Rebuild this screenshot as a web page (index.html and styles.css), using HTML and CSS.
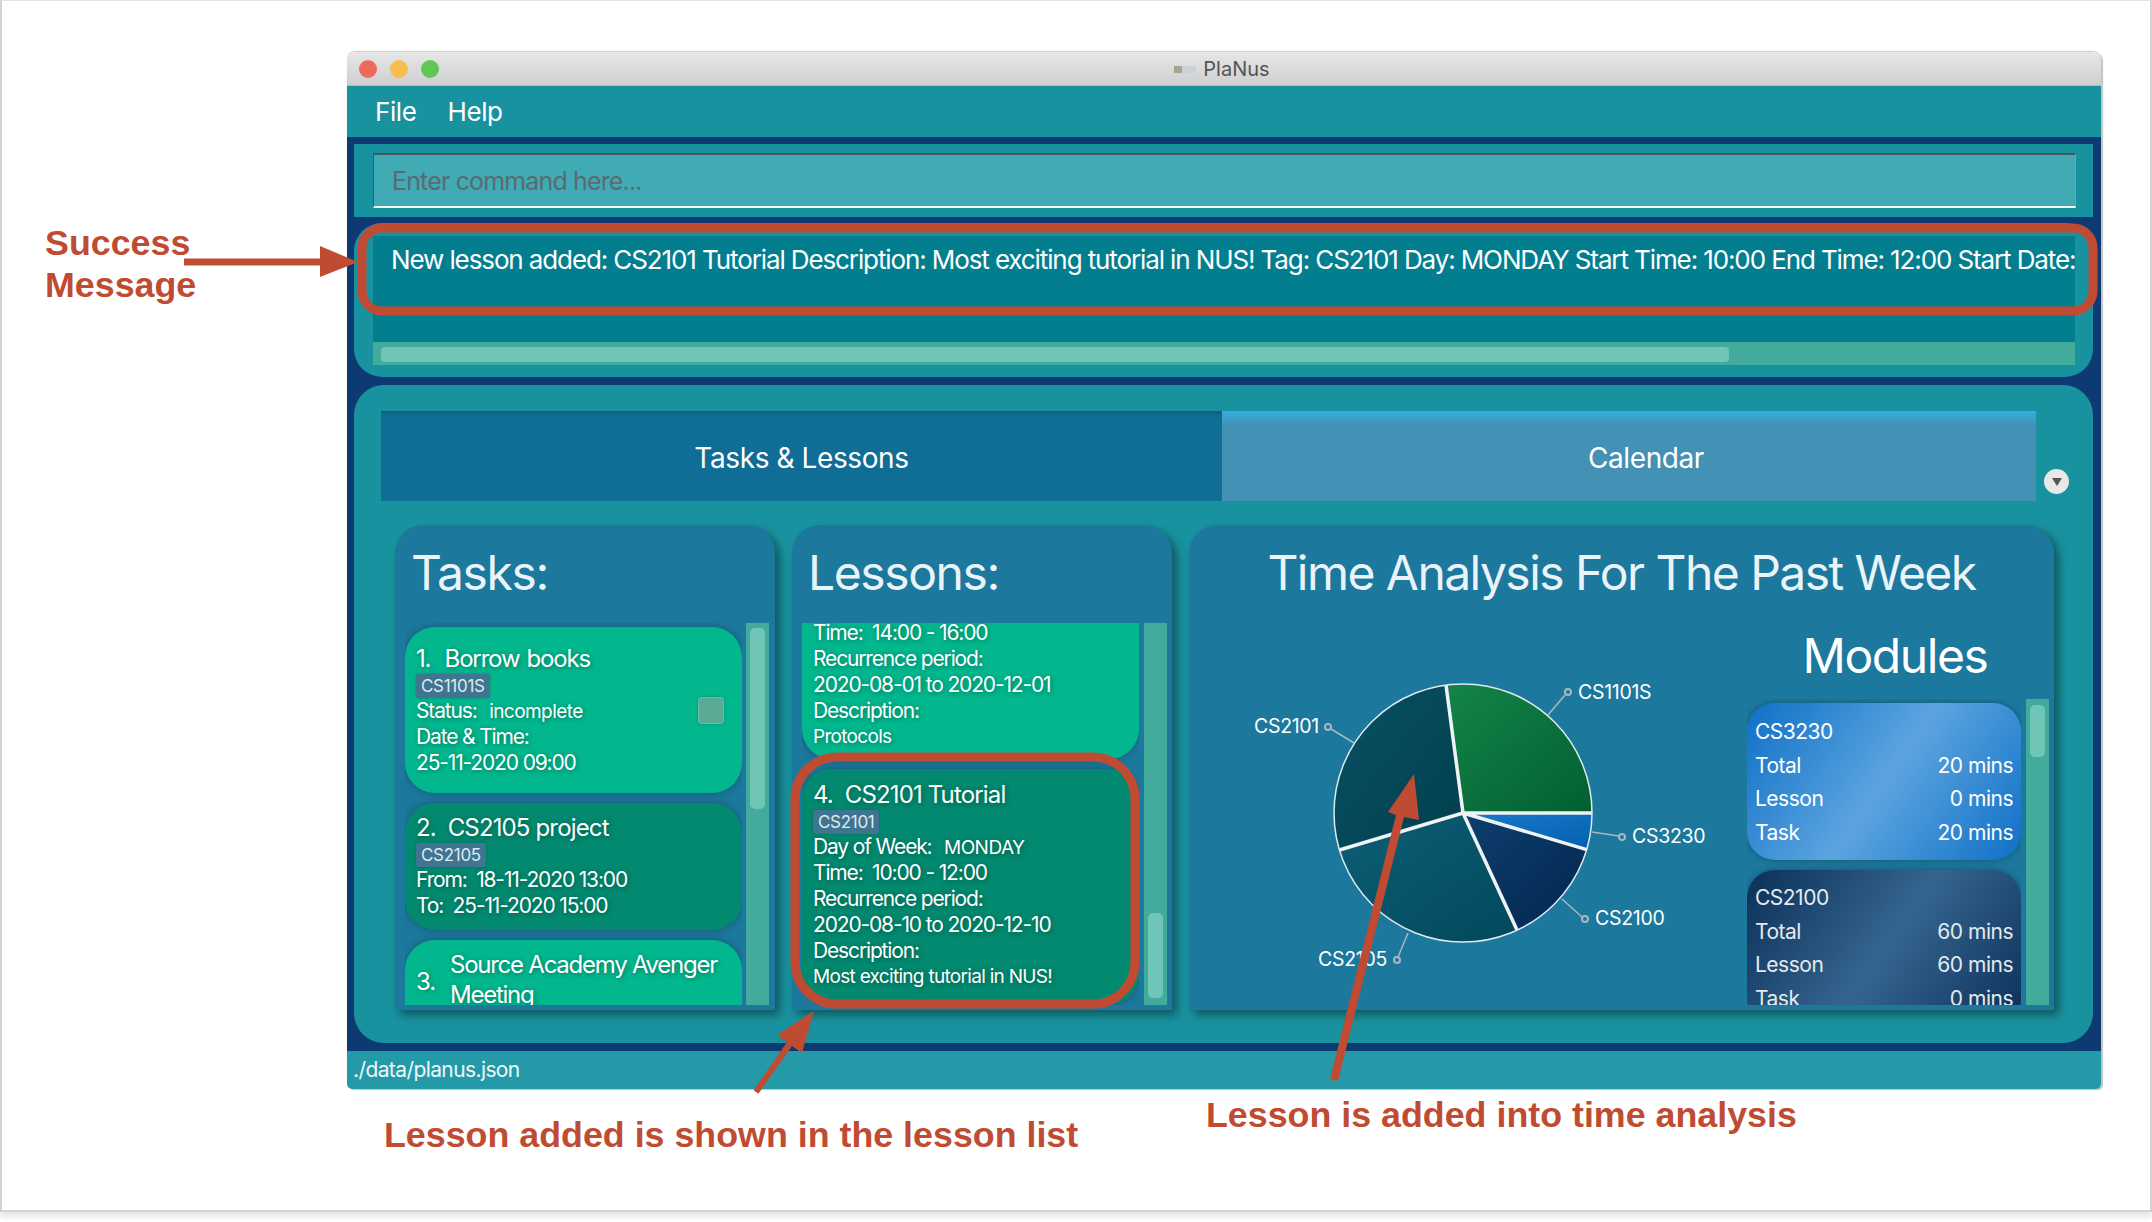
FILE: index.html
```html
<!DOCTYPE html>
<html lang="en">
<head>
    <meta charset="UTF-8">
    <title>PlaNus - Add lesson</title>
    <link rel="stylesheet" href="styles.css">
</head>
<body>
    <div class="page">
        <div class="window">
            <!-- Title bar -->
            <div class="titlebar">
                <div class="lights"><span class="light red"></span><span class="light yellow"></span><span class="light green"></span></div>
                <div class="title"><span class="app-icon"></span>PlaNus</div>
            </div>

            <!-- Menu -->
            <div class="menu"><span>File</span><span>Help</span></div>

            <div class="content">
                <!-- Command box -->
                <div class="command-panel">
                    <div class="command-input">Enter command here...</div>
                </div>

                <!-- Result display -->
                <div class="result-panel">
                    <div class="result-text">New lesson added: CS2101 Tutorial Description: Most exciting tutorial in NUS! Tag: CS2101 Day: MONDAY Start Time: 10:00 End Time: 12:00 Start Date:</div>
                    <div class="hbar"><div class="hbar-thumb"></div></div>
                </div>

                <!-- Main panel -->
                <div class="main-panel">
                    <div class="tabs">
                        <div class="tab tab-active">Tasks &amp; Lessons</div>
                        <div class="tab tab-calendar">Calendar</div>
                        <div class="tab-more"><svg width="10" height="8" viewBox="0 0 10 8"><path d="M0 0 H10 L5 8 Z" fill="#555"/></svg></div>
                    </div>

                    <div class="columns">
                        <!-- Tasks -->
                        <div class="column column-list">
                            <h2>Tasks:</h2>
                            <div class="list-wrap">
                                <div class="list">
                                    <div class="card card-light task-first">
                                        <div class="card-body">
                                            <div class="card-title">1.&nbsp; Borrow books</div>
                                            <div><span class="tag">CS1101S</span></div>
                                            <div class="line">Status:&nbsp; <span class="small">incomplete</span></div>
                                            <div class="line">Date &amp; Time:</div>
                                            <div class="line">25-11-2020 09:00</div>
                                        </div>
                                        <span class="check"></span>
                                    </div>
                                    <div class="card card-dark task-second">
                                        <div class="card-body">
                                            <div class="card-title">2.&nbsp; CS2105 project</div>
                                            <div><span class="tag">CS2105</span></div>
                                            <div class="line">From:&nbsp; 18-11-2020 13:00</div>
                                            <div class="line">To:&nbsp; 25-11-2020 15:00</div>
                                        </div>
                                    </div>
                                    <div class="card card-light task-third">
                                        <span class="card-num">3.</span>
                                        <div class="card-wrap-title">Source Academy Avenger Meeting</div>
                                    </div>
                                </div>
                                <div class="track"><div class="thumb thumb-tasks"></div></div>
                            </div>
                        </div>

                        <!-- Lessons -->
                        <div class="column column-list">
                            <h2>Lessons:</h2>
                            <div class="list-wrap">
                                <div class="list">
                                    <div class="card card-light lesson-clipped">
                                        <div class="card-body">
                                            <div class="line">Time:&nbsp; 14:00 - 16:00</div>
                                            <div class="line">Recurrence period:</div>
                                            <div class="line">2020-08-01 to 2020-12-01</div>
                                            <div class="line">Description:</div>
                                            <div class="line small">Protocols</div>
                                        </div>
                                    </div>
                                    <div class="card card-dark lesson-new">
                                        <div class="card-body">
                                            <div class="card-title">4.&nbsp; CS2101 Tutorial</div>
                                            <div><span class="tag">CS2101</span></div>
                                            <div class="line">Day of Week:&nbsp; <span class="small">MONDAY</span></div>
                                            <div class="line">Time:&nbsp; 10:00 - 12:00</div>
                                            <div class="line">Recurrence period:</div>
                                            <div class="line">2020-08-10 to 2020-12-10</div>
                                            <div class="line">Description:</div>
                                            <div class="line small">Most exciting tutorial in NUS!</div>
                                        </div>
                                    </div>
                                </div>
                                <div class="track"><div class="thumb thumb-lessons"></div></div>
                            </div>
                        </div>

                        <!-- Time analysis -->
                        <div class="column column-time">
                            <h2 class="time-title">Time Analysis For The Past Week</h2>
                            <div class="time-body">
                                <svg class="pie" viewBox="1189 623 553 382" width="553" height="382">
                                    <defs>
                                        <linearGradient id="gGreen" x1="0" y1="0" x2="1" y2="1"><stop offset="0" stop-color="#148449"/><stop offset="1" stop-color="#025f30"/></linearGradient>
                                        <linearGradient id="gBlue" x1="0" y1="0" x2="1" y2="1"><stop offset="0" stop-color="#1a7acb"/><stop offset="1" stop-color="#0260b0"/></linearGradient>
                                        <linearGradient id="gNavy" x1="0" y1="0" x2="1" y2="1"><stop offset="0" stop-color="#0f3e70"/><stop offset="1" stop-color="#01264d"/></linearGradient>
                                        <linearGradient id="gTeal" x1="0" y1="0" x2="1" y2="1"><stop offset="0" stop-color="#0c5f76"/><stop offset="1" stop-color="#02485c"/></linearGradient>
                                        <linearGradient id="gDeep" x1="0" y1="0" x2="1" y2="1"><stop offset="0" stop-color="#085264"/><stop offset="1" stop-color="#023e4d"/></linearGradient>
                                    </defs>
                                    <path d="M1463 813 L1446 685 A129 129 0 0 1 1592 813 Z" fill="url(#gGreen)"/>
                                    <path d="M1463 813 L1592 813 A129 129 0 0 1 1586.7 849.6 Z" fill="url(#gBlue)"/>
                                    <path d="M1463 813 L1586.7 849.6 A129 129 0 0 1 1517 930 Z" fill="url(#gNavy)"/>
                                    <path d="M1463 813 L1517 930 A129 129 0 0 1 1339.4 850 Z" fill="url(#gTeal)"/>
                                    <path d="M1463 813 L1339.4 850 A129 129 0 0 1 1446 685 Z" fill="url(#gDeep)"/>
                                    <path d="M1463 813 L1446 685 M1463 813 L1592 813 M1463 813 L1586.7 849.6 M1463 813 L1517 930 M1463 813 L1339.4 850" class="pie-spoke"/>
                                    <circle cx="1463" cy="813" r="129" class="pie-rim"/>
                                    <path d="M1548 715 L1565 695 M1354 743 L1331 729 M1592 832 L1619 836 M1562 899 L1582 917 M1408 933 L1398 957" class="pie-lead"/>
                                    <circle cx="1568" cy="692" r="3" class="pie-dot"/>
                                    <circle cx="1328" cy="727" r="3" class="pie-dot"/>
                                    <circle cx="1622" cy="837" r="3" class="pie-dot"/>
                                    <circle cx="1585" cy="919" r="3" class="pie-dot"/>
                                    <circle cx="1397" cy="960" r="3" class="pie-dot"/>
                                    <text x="1578" y="699" class="pie-label">CS1101S</text>
                                    <text x="1319" y="733" text-anchor="end" class="pie-label">CS2101</text>
                                    <text x="1632" y="843" class="pie-label">CS3230</text>
                                    <text x="1595" y="925" class="pie-label">CS2100</text>
                                    <text x="1387" y="966" text-anchor="end" class="pie-label">CS2105</text>
                                </svg>
                                <div class="modules">
                                    <h2 class="modules-title">Modules</h2>
                                    <div class="modules-wrap">
                                        <div class="module-list">
                                            <div class="module module-blue">
                                                <div class="module-name">CS3230</div>
                                                <div class="module-row"><span>Total</span><span>20 mins</span></div>
                                                <div class="module-row"><span>Lesson</span><span>0 mins</span></div>
                                                <div class="module-row"><span>Task</span><span>20 mins</span></div>
                                            </div>
                                            <div class="module module-navy">
                                                <div class="module-name">CS2100</div>
                                                <div class="module-row"><span>Total</span><span>60 mins</span></div>
                                                <div class="module-row"><span>Lesson</span><span>60 mins</span></div>
                                                <div class="module-row"><span>Task</span><span>0 mins</span></div>
                                            </div>
                                        </div>
                                        <div class="track track-modules"><div class="thumb thumb-modules"></div></div>
                                    </div>
                                </div>
                            </div>
                        </div>
                    </div>
                </div>
            </div>

            <!-- Status bar -->
            <div class="statusbar">./data/planus.json</div>
        </div>

        <!-- Annotations on top of the screenshot -->
        <svg class="marks" viewBox="0 0 2152 1222" width="2152" height="1222">
            <rect x="362" y="228" width="1731" height="83" rx="20" class="mark-box"/>
            <rect x="795" y="757" width="340" height="247" rx="42" class="mark-box"/>
            <path d="M184 258.500 H320 V246 L358 262 L320 277 V265.500 H184 Z" class="mark-arrow"/>
            <path d="M753.600 1090.300 L787 1042 L777 1035 L814 1011 L802 1053 L792 1046 L758.400 1093.700 Z" class="mark-arrow"/>
            <path d="M1330 1079 L1396 815 L1388 812 L1414 774 L1419 820 L1404 817 L1338 1081 Z" class="mark-arrow"/>
        </svg>
        <div class="note note-success">Success<br>Message</div>
        <div class="note note-list">Lesson added is shown in the lesson list</div>
        <div class="note note-time">Lesson is added into time analysis</div>
    </div>
</body>
</html>
```

FILE: styles.css
```css
* { margin: 0; padding: 0; box-sizing: border-box; }
html, body { background: #fff; }
body { width: 2152px; height: 1222px; overflow: hidden; font-family: 'Inter', 'Liberation Sans', sans-serif; color: #fff; }

/* Page frame */
.page { position: relative; width: 2152px; height: 1212px; padding: 51px 0 0 345px; background: #fff; border-left: 2px solid #d2d2d2; border-right: 2px solid #d2d2d2; border-bottom: 2px solid #d2d2d2; border-top: 1px solid #e4e4e4; box-shadow: 0 5px 6px #e6e6e6; }

/* Window */
.window { width: 1754px; height: 1037px; display: flex; flex-direction: column; border-radius: 8px 8px 5px 5px; overflow: hidden; box-shadow: 2px 1px 1px #c4c4c4, 0 -1px 1px #ccc; }
.titlebar { position: relative; height: 34px; flex: none; display: flex; align-items: center; justify-content: center; background: linear-gradient(#e7e7e7, #cfcfcf); border-bottom: 1px solid #b9b9b9; }
.lights { position: absolute; left: 12px; top: 8px; display: flex; gap: 13px; }
.light { width: 18px; height: 18px; border-radius: 50%; }
.red { background: #f0695f; }
.yellow { background: #f9bd4f; }
.green { background: #62c655; }
.title { display: flex; align-items: center; font-size: 20px; color: #555; padding-right: 4px; padding-top: 1px; }
.app-icon { width: 22px; height: 7px; margin-right: 7px; background: linear-gradient(90deg, #a6a58f 35%, #c9d2d8 35%); }

.menu { height: 51px; flex: none; display: flex; align-items: center; gap: 31px; padding-left: 28px; background: #19929f; font-size: 26px; letter-spacing: -0.4px; }

.content { flex: 1; background: #0d3a73; padding: 7px 8px 8px 7px; display: flex; flex-direction: column; }

/* Command box */
.command-panel { height: 73px; flex: none; padding: 9px 17px 9px 19px; background: #19929f; }
.command-input { height: 55px; display: flex; align-items: center; padding-left: 18px; background: #41abb5; border-top: 2px solid #48585e; border-left: 1px solid #48585e; border-right: 1px solid #7a9ea3; border-bottom: 2px solid #f2f7f7; color: #5a6a72; font-size: 25px; letter-spacing: -0.85px; }

/* Result */
.result-panel { height: 154px; flex: none; margin-top: 6px; padding: 13px 18px 12px 19px; background: #19929f; border-radius: 28px; }
.result-text { height: 106px; padding: 9px 0 0 18px; background: #027e8f; font-size: 26px; line-height: 30px; white-space: nowrap; overflow: hidden; letter-spacing: -1.11px; }
.hbar { height: 23px; padding: 5px 8px; background: #43ab9b; }
.hbar-thumb { width: 1348px; height: 15px; background: #6fc5b6; border-radius: 4px; }

/* Main panel */
.main-panel { flex: 1; margin-top: 8px; padding: 26px 0 0 27px; background: #19929f; border-radius: 30px; }
.tabs { display: flex; height: 90px; }
.tab { display: flex; align-items: center; justify-content: center; padding-top: 3px; font-size: 28px; letter-spacing: -0.4px; }
.tab-active { width: 841px; background: linear-gradient(#0c5e7f 0, #106d95 5px); }
.tab-calendar { width: 814px; padding-left: 34px; background: linear-gradient(#35ade0 0, #4392b6 14px); }
.tab-more { width: 25px; height: 25px; margin: 58px 0 0 8px; display: flex; align-items: center; justify-content: center; background: #e8e8e8; border-radius: 50%; }

.columns { display: flex; gap: 17px; margin: 24px 0 0 14px; }
.column { height: 485px; background: #1c789d; border-radius: 28px 28px 0 0; box-shadow: 5px 5px 10px rgba(0, 0, 0, 0.4); }
.column-list { width: 380px; padding-bottom: 5px; }
.column-time { width: 865px; }
.column h2 { height: 98px; padding: 22px 0 0 16px; font-size: 48px; line-height: 52px; font-weight: 400; letter-spacing: -1.4px; color: #eaf3f7; }
.column .time-title { padding: 22px 0 0 0; text-align: center; letter-spacing: -1.55px; }

.list-wrap { display: flex; height: 382px; padding: 0 5px 0 10px; }
.list { width: 337px; height: 382px; overflow: hidden; margin-right: 4px; }
.column-list:nth-child(2) .list-wrap .list { margin-right: 5px; }
.track { width: 23px; height: 382px; padding: 5px 4px; background: #43ab9b; flex: none; }
.track-modules { height: 306px; }
.thumb { background: #6fc5b6; border-radius: 5px; width: 15px; }
.thumb-tasks { height: 181px; }
.thumb-lessons { height: 85px; margin-top: 285px; }
.thumb-modules { height: 52px; margin-top: 1px; }

/* List cards */
.card { display: flex; align-items: center; border-radius: 30px; box-shadow: 0 0 8px rgba(0, 0, 0, 0.25); padding-left: 11px; font-size: 21px; text-shadow: 1px 1px 5px rgba(0, 0, 0, 0.35); letter-spacing: -1.15px; }
.card-light { background: #02b68d; }
.card-dark { background: #02896f; }
.card-body { flex: 1; }
.card-title { font-size: 24px; line-height: 28px; height: 27px; letter-spacing: -0.85px; }
.task-first .card-title { letter-spacing: -1.15px; word-spacing: 1.5px; }
.line { height: 26px; line-height: 26px; }
.small { font-size: 19px; letter-spacing: -0.55px; margin-left: 3px; }
.line.small { font-size: 19px; letter-spacing: -0.7px; margin-left: 0; }
.tag { display: inline-block; height: 24px; line-height: 24px; padding: 0 5px; margin-top: 2px; background: #3f7590; border-radius: 3px; font-size: 17px; letter-spacing: -0.3px; color: #dfe9ee; text-shadow: none; box-shadow: 0 0 3px rgba(0, 0, 0, 0.2); vertical-align: top; }
.check { width: 26px; height: 27px; margin: 0 18px 0 0; background: #5baa96; border: 1px solid #6dbba6; border-radius: 3px; box-shadow: 0 0 3px rgba(0, 0, 0, 0.2); }
.task-first { height: 166px; margin-top: 4px; }
.task-second { height: 127px; margin-top: 10px; }
.task-third { height: 120px; margin-top: 10px; align-items: flex-start; padding-top: 10px; }
.card-num { font-size: 24px; margin-top: 17px; width: 34px; flex: none; }
.card-wrap-title { font-size: 24px; line-height: 30px; width: 285px; letter-spacing: -1.25px; }
.lesson-clipped { height: 176px; margin-top: -40px; padding-top: 37px; align-items: flex-start; }
.lesson-new { height: 235px; margin-top: 10px; padding-top: 12px; align-items: flex-start; }

/* Time analysis */
.time-body { display: flex; height: 382px; }
.pie { flex: none; display: block; }
.pie-spoke { stroke: #eef3f3; stroke-width: 3.5; fill: none; }
.pie-rim { fill: none; stroke: #dfe9ee; stroke-width: 1.5; }
.pie-lead { stroke: #a9b8bd; stroke-width: 1.5; fill: none; }
.pie-dot { fill: none; stroke: #a9b8bd; stroke-width: 2; }
.pie-label { fill: #fff; font-size: 19.500px; letter-spacing: -0.3px; }

.modules { width: 307px; padding-left: 5px; }
.column .modules-title { height: 76px; padding: 7px 6px 0 0; text-align: center; color: #fff; }
.modules-wrap { display: flex; height: 306px; }
.module-list { width: 274px; height: 306px; margin-right: 5px; overflow: hidden; }
.module { height: 157px; margin-top: 4px; padding: 14px 8px 0 8px; border-radius: 28px; font-size: 21px; letter-spacing: -0.5px; box-shadow: 0 0 6px rgba(0, 0, 0, 0.3); }
.module + .module { margin-top: 10px; padding-top: 13px; }
.module-blue { background: linear-gradient(125deg, #0f70c6 0%, #5ca4df 50%, #0f70c6 100%); }
.module-navy { background: linear-gradient(125deg, #0b3058 0%, #35658f 50%, #0b3058 100%); color: #e3eaef; }
.module-name { height: 32px; line-height: 30px; }
.module-row { display: flex; justify-content: space-between; height: 33.300px; line-height: 34px; }

.statusbar { height: 38px; flex: none; display: flex; align-items: center; padding: 0 0 1px 6px; background: #249aa8; font-size: 21px; letter-spacing: -0.6px; color: #eef7f8; }

/* Annotations */
.marks { position: absolute; left: -2px; top: -1px; pointer-events: none; }
.mark-box { fill: none; stroke: #bf4c32; stroke-width: 9; }
.mark-arrow { fill: #bf4c32; }
.note { position: absolute; font-family: 'Liberation Sans', sans-serif; font-weight: 700; color: #bf4c32; font-size: 35.800px; line-height: 42px; white-space: nowrap; }
.note-success { left: 43px; top: 221px; }
.note-list { left: 382px; top: 1113px; }
.note-time { left: 1204px; top: 1093px; }
```
